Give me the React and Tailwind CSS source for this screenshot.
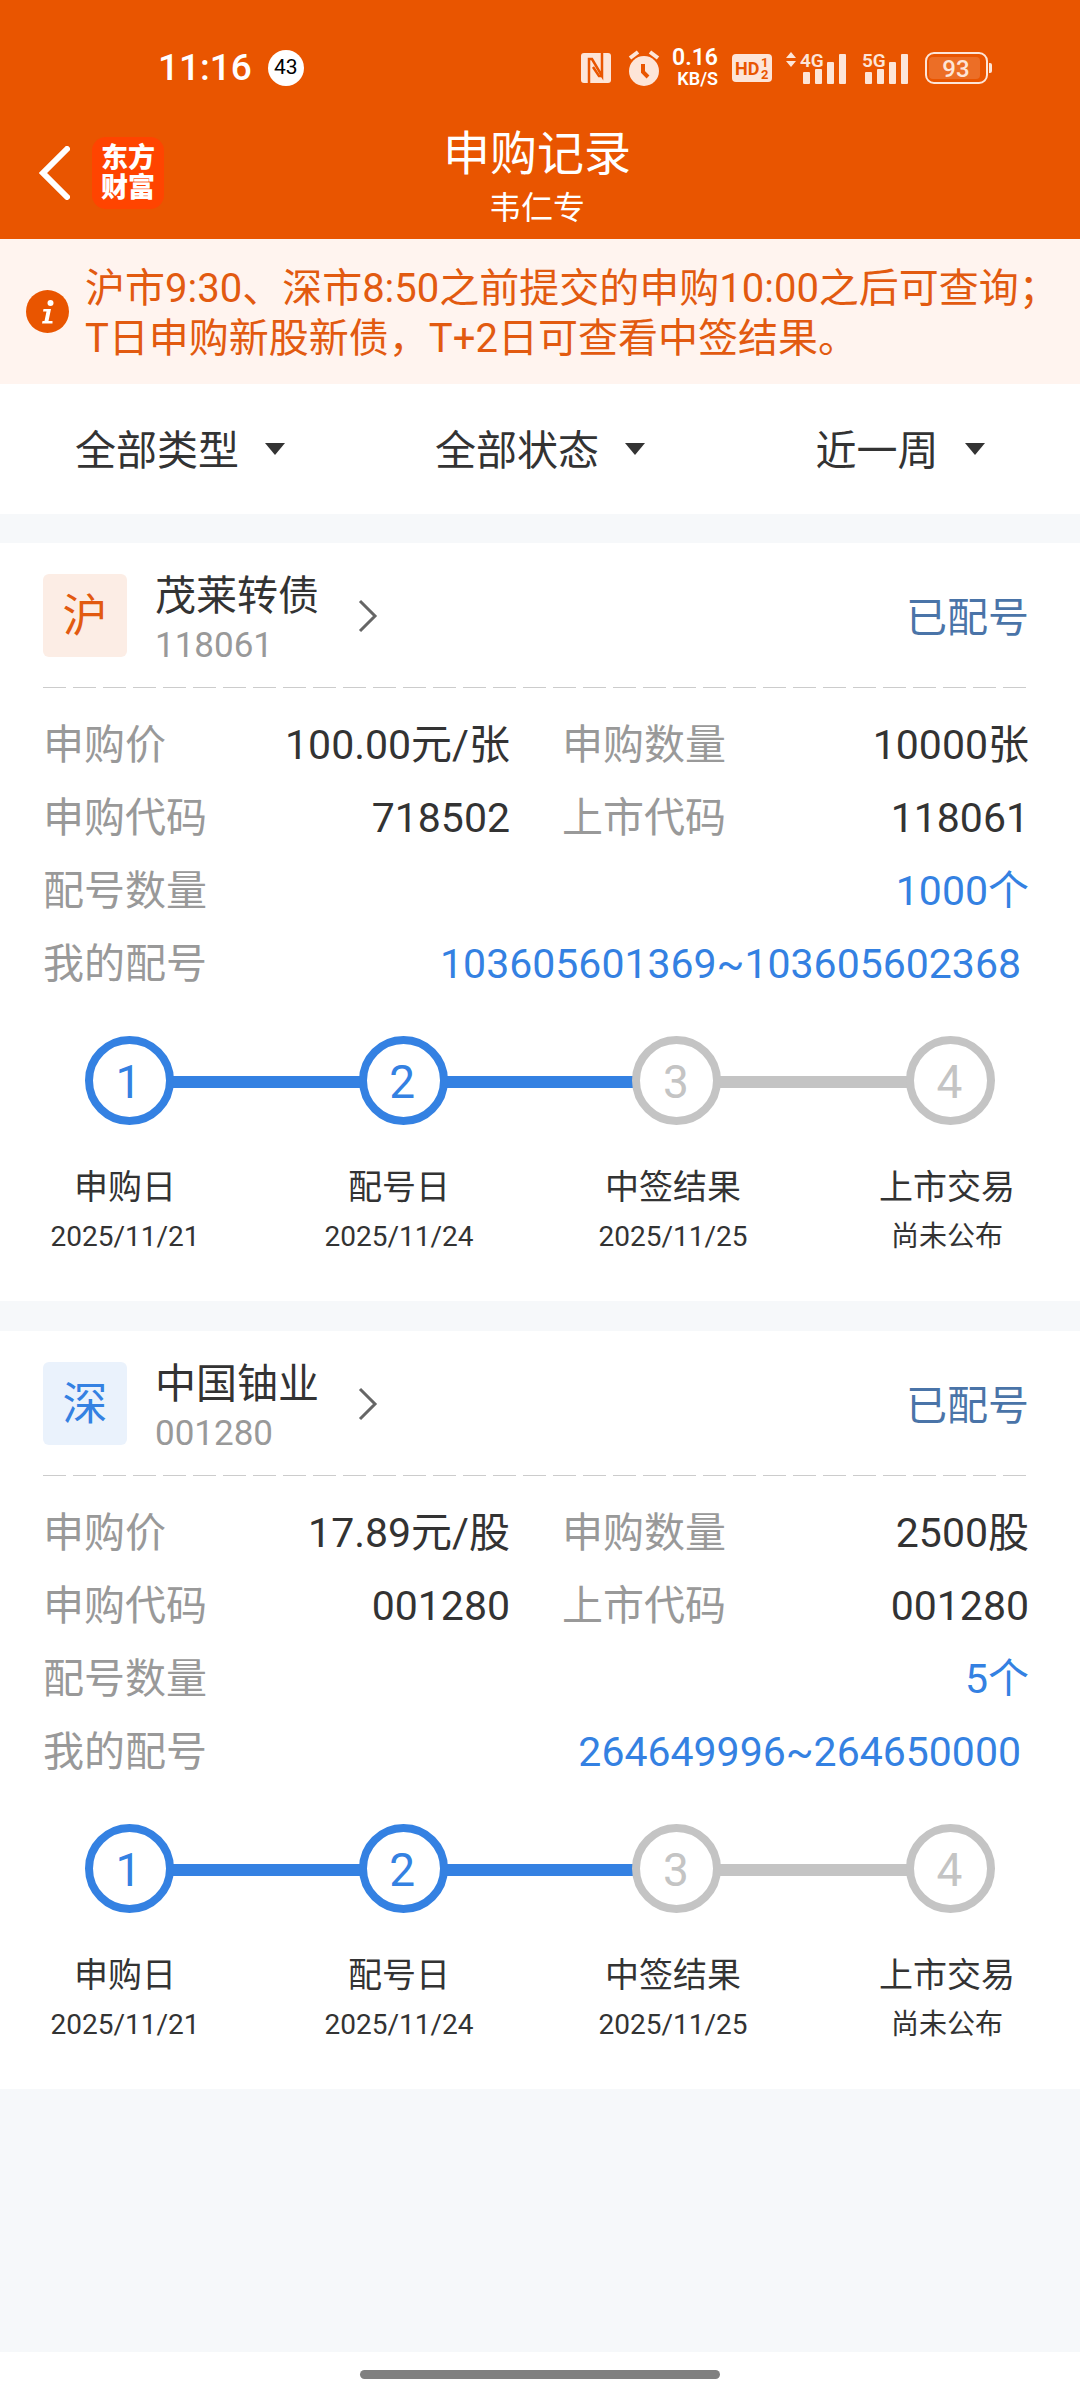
import React from "react";

const records = [
  {
    market: "沪",
    tone: "bg-[#fcede5] text-[#e25a10]",
    name: "茂莱转债",
    code: "118061",
    status: "已配号",
    price: "100.00元/张",
    amount: "10000张",
    applyCode: "718502",
    listCode: "118061",
    count: "1000个",
    numbers: "103605601369~103605602368",
  },
  {
    market: "深",
    tone: "bg-[#eaf2fc] text-[#3481e2]",
    name: "中国铀业",
    code: "001280",
    status: "已配号",
    price: "17.89元/股",
    amount: "2500股",
    applyCode: "001280",
    listCode: "001280",
    count: "5个",
    numbers: "264649996~264650000",
  },
];

const steps = [
  { label: "申购日", date: "2025/11/21", done: true },
  { label: "配号日", date: "2025/11/24", done: true },
  { label: "中签结果", date: "2025/11/25", done: false },
  { label: "上市交易", date: "尚未公布", done: false },
];

const filters = [
  { id: "type", name: "类型", value: "全部类型" },
  { id: "state", name: "状态", value: "全部状态" },
  { id: "period", name: "时间", value: "近一周" },
];

function Signal({ network, arrows }) {
  return (
    <svg width="62" height="48" viewBox="0 -6 62 48" fill="#fde5d8" aria-label={network}>
      {arrows && <path d="M0 8 5 2l5 6zM0 11h10l-5 6z" />}
      <text x="14" y="17" fontSize="19" fontWeight="600">{network}</text>
      <rect x="17" y="22" width="7" height="12" rx="1" />
      <rect x="29" y="19" width="7" height="15" rx="1" />
      <rect x="41" y="12" width="7" height="22" rx="1" />
      <rect x="53" y="4" width="7" height="30" rx="1" />
    </svg>
  );
}

function StatusBar() {
  return (
    <div className="flex h-[124px] items-start pt-12 pr-[87px] pl-[158px]">
      <div className="flex h-10 items-center gap-4">
        <span className="text-[37px] leading-10 font-medium text-white">11:16</span>
        <span className="flex size-9 items-center justify-center rounded-full bg-white text-[21px] text-black">43</span>
      </div>
      <div className="ml-auto flex h-10 items-center">
        <svg className="mr-[17px]" width="30" height="30" viewBox="0 0 30 30" aria-label="NFC">
          <rect width="30" height="30" rx="3" fill="#fde5d8" />
          <g fill="none" stroke="#e95500" strokeWidth="2.500">
            <path d="M8 30V6h3l10 17V0" />
            <path d="M12 14l6 9h3" />
          </g>
        </svg>
        <svg className="mr-3" width="32" height="36" viewBox="0 0 32 36" fill="none" aria-label="闹钟">
          <circle cx="16" cy="21" r="15" fill="#fde5d8" />
          <path d="M2 8l8-6M30 8l-8-6" stroke="#fde5d8" strokeWidth="4" />
          <path d="M15 14v8l5 5" stroke="#e95500" strokeWidth="4" />
        </svg>
        <div className="mr-[14px] flex flex-col items-end text-white">
          <span className="text-[23px] leading-[21px] font-semibold">0.16</span>
          <span className="text-[18px] leading-[21px] font-semibold">KB/S</span>
        </div>
        <svg className="mr-[14px]" width="40" height="28" viewBox="0 0 40 28" aria-label="HD 1 2">
          <rect width="40" height="28" rx="4" fill="#fde5d8" />
          <g fill="#e95500" fontWeight="700">
            <text x="3" y="21" fontSize="18">HD</text>
            <text x="29" y="13" fontSize="13">1</text>
            <text x="29" y="25" fontSize="13">2</text>
          </g>
        </svg>
        <Signal network="4G" arrows />
        <Signal network="5G" />
        <svg className="ml-[15px]" width="68" height="32" viewBox="0 0 68 32" aria-label="93%">
          <rect x="1" y="1" width="61" height="30" rx="8" fill="none" stroke="#fde5d8" strokeWidth="2" />
          <rect x="4" y="5" width="51" height="22" rx="4" fill="#fff" fillOpacity=".15" />
          <path d="M64 11h1q2 0 2 2v6q0 2-2 2h-1z" fill="#fde5d8" />
          <text x="31" y="25" fontSize="24" fontWeight="500" textAnchor="middle" fill="#fde5d8">93</text>
        </svg>
      </div>
    </div>
  );
}

function Header() {
  return (
    <header className="bg-[#e95500]">
      <StatusBar />
      <div className="grid h-[115px] grid-cols-[1fr_auto_1fr] items-start pr-1.5 text-white">
        <div className="mt-[13px] flex items-center gap-[22px] pl-[39px]">
          <button type="button" aria-label="返回">
            <svg width="31" height="54" viewBox="0 0 31 54" fill="none">
              <path d="M28 3 4 27l24 24" stroke="#fff" strokeWidth="6" strokeLinecap="round" />
            </svg>
          </button>
          <div className="flex size-[72px] flex-col items-center justify-center rounded-[14px] bg-[#ff4400] text-[27px] leading-[30px] font-black">
            <span>东方</span>
            <span>财富</span>
          </div>
        </div>
        <div className="pt-0.5 text-center">
          <h1 className="text-[47px] leading-[56px]">申购记录</h1>
          <p className="mt-1.5 text-[32px] leading-10">韦仁专</p>
        </div>
      </div>
    </header>
  );
}

function Notice() {
  return (
    <section className="flex h-[145px] items-center gap-4 bg-[#fff4ef] pl-[26px] text-[#e25a10]">
      <svg className="shrink-0" width="43" height="43" viewBox="0 0 43 43" aria-hidden="true">
        <circle cx="21.500" cy="21.500" r="21.500" fill="#e95500" />
        <circle cx="24.500" cy="13" r="3" fill="#fff" />
        <path d="M17.500 19h7.500l-2.500 12h4v2.500H16l.5-2.500h2l2-9.500h-3.500z" fill="#fff" />
      </svg>
      <p className="pt-1 text-[40px] leading-[50px] whitespace-nowrap">
        沪市9:30、深市8:50之前提交的申购10:00之后可查询；
        <br />
        T日申购新股新债，T+2日可查看中签结果。
      </p>
    </section>
  );
}

function Filters() {
  return (
    <nav className="grid h-[130px] grid-cols-3 bg-white">
      {filters.map((f) => (
        <div key={f.id} className="flex items-center justify-center gap-[26px]">
          <select id={f.id} aria-label={f.name} className="appearance-none bg-transparent pt-1 text-[41px] leading-[60px] text-[#333]">
            <option>{f.value}</option>
          </select>
          <svg className="pointer-events-none" width="20" height="12" viewBox="0 0 20 12" aria-hidden="true">
            <path d="M0 0h20L10 12z" fill="#333" />
          </svg>
        </div>
      ))}
    </nav>
  );
}

function Field({ label, value, wide, blue, inset }) {
  return (
    <div className={wide ? "col-span-2 flex justify-between" : "flex justify-between"}>
      <dt className="text-[#999]">{label}</dt>
      <dd className={`${blue ? "text-[#3481e2]" : "text-[#333]"} ${inset ? "pr-2" : ""}`}>{value}</dd>
    </div>
  );
}

function Steps() {
  return (
    <>
      <ol className="mt-[35px] flex items-center px-[85px]">
        {steps.map((s, i) => (
          <React.Fragment key={s.label}>
            {i > 0 && (
              <li
                aria-hidden="true"
                className={`-mx-1 mt-[3px] h-3 flex-1 ${steps[i - 1].done ? "bg-[#3481e2]" : "bg-[#c4c4c4]"}`}
              />
            )}
            <li
              className={`relative flex size-[89px] items-center justify-center rounded-full border-8 bg-white pt-1 pr-0.5 text-[46px] ${
                s.done ? "border-[#3481e2] text-[#3481e2]" : "border-[#c4c4c4] text-[#c4c4c4]"
              }`}
            >
              {i + 1}
            </li>
          </React.Fragment>
        ))}
      </ol>
      <div className="mt-[37px] flex justify-between pr-[45px] pl-[37px] text-center text-[#333]">
        {steps.map((s) => (
          <div key={s.label} className="w-[176px]">
            <p className="text-[34px] leading-[50px]">{s.label}</p>
            <p className="text-[28px] leading-[50px]">{s.date}</p>
          </div>
        ))}
      </div>
    </>
  );
}

function Card({ record }) {
  return (
    <article className="bg-white pb-[39px]">
      <div className="pt-[31px] pr-[51px] pl-[43px]">
        <div className="flex h-[113px] items-start">
          <div className={`flex h-[83px] w-[84px] items-center justify-center rounded-md pt-0.5 text-[45px] ${record.tone}`}>
            {record.market}
          </div>
          <div className="-mt-1.5 ml-7">
            <h2 className="text-[41px] leading-[56px] text-[#333]">{record.name}</h2>
            <p className="text-[35px] leading-[44px] text-[#999]">{record.code}</p>
          </div>
          <button type="button" aria-label="查看详情" className="mt-6 ml-[38px]">
            <svg width="22" height="36" viewBox="0 0 22 36" fill="none">
              <path d="M3 3l15 15L3 33" stroke="#666" strokeWidth="3" />
            </svg>
          </button>
          <span className="ml-auto text-[41px] leading-[88px] text-[#4a74a8]">{record.status}</span>
        </div>
        <div className="h-px bg-[repeating-linear-gradient(90deg,#ccc_0_23px,transparent_23px_30px)]" />
        <dl className="mt-[21px] grid grid-cols-2 gap-x-[52px] text-[41px] leading-[73px]">
          <Field label="申购价" value={record.price} />
          <Field label="申购数量" value={record.amount} />
          <Field label="申购代码" value={record.applyCode} />
          <Field label="上市代码" value={record.listCode} />
          <Field label="配号数量" value={record.count} wide blue />
          <Field label="我的配号" value={record.numbers} wide blue inset />
        </dl>
      </div>
      <Steps />
    </article>
  );
}

export default function App() {
  return (
    <div className="flex min-h-screen flex-col bg-[#f6f8fa] font-[Roboto,'Noto_Sans_CJK_SC',sans-serif]">
      <Header />
      <Notice />
      <Filters />
      <main className="mt-[29px] flex flex-1 flex-col gap-[30px]">
        {records.map((r) => (
          <Card key={r.name} record={r} />
        ))}
      </main>
      <footer className="flex h-12 justify-center bg-white pt-[18px]">
        <div className="h-[9px] w-1/3 rounded-full bg-[#808080]" />
      </footer>
    </div>
  );
}
